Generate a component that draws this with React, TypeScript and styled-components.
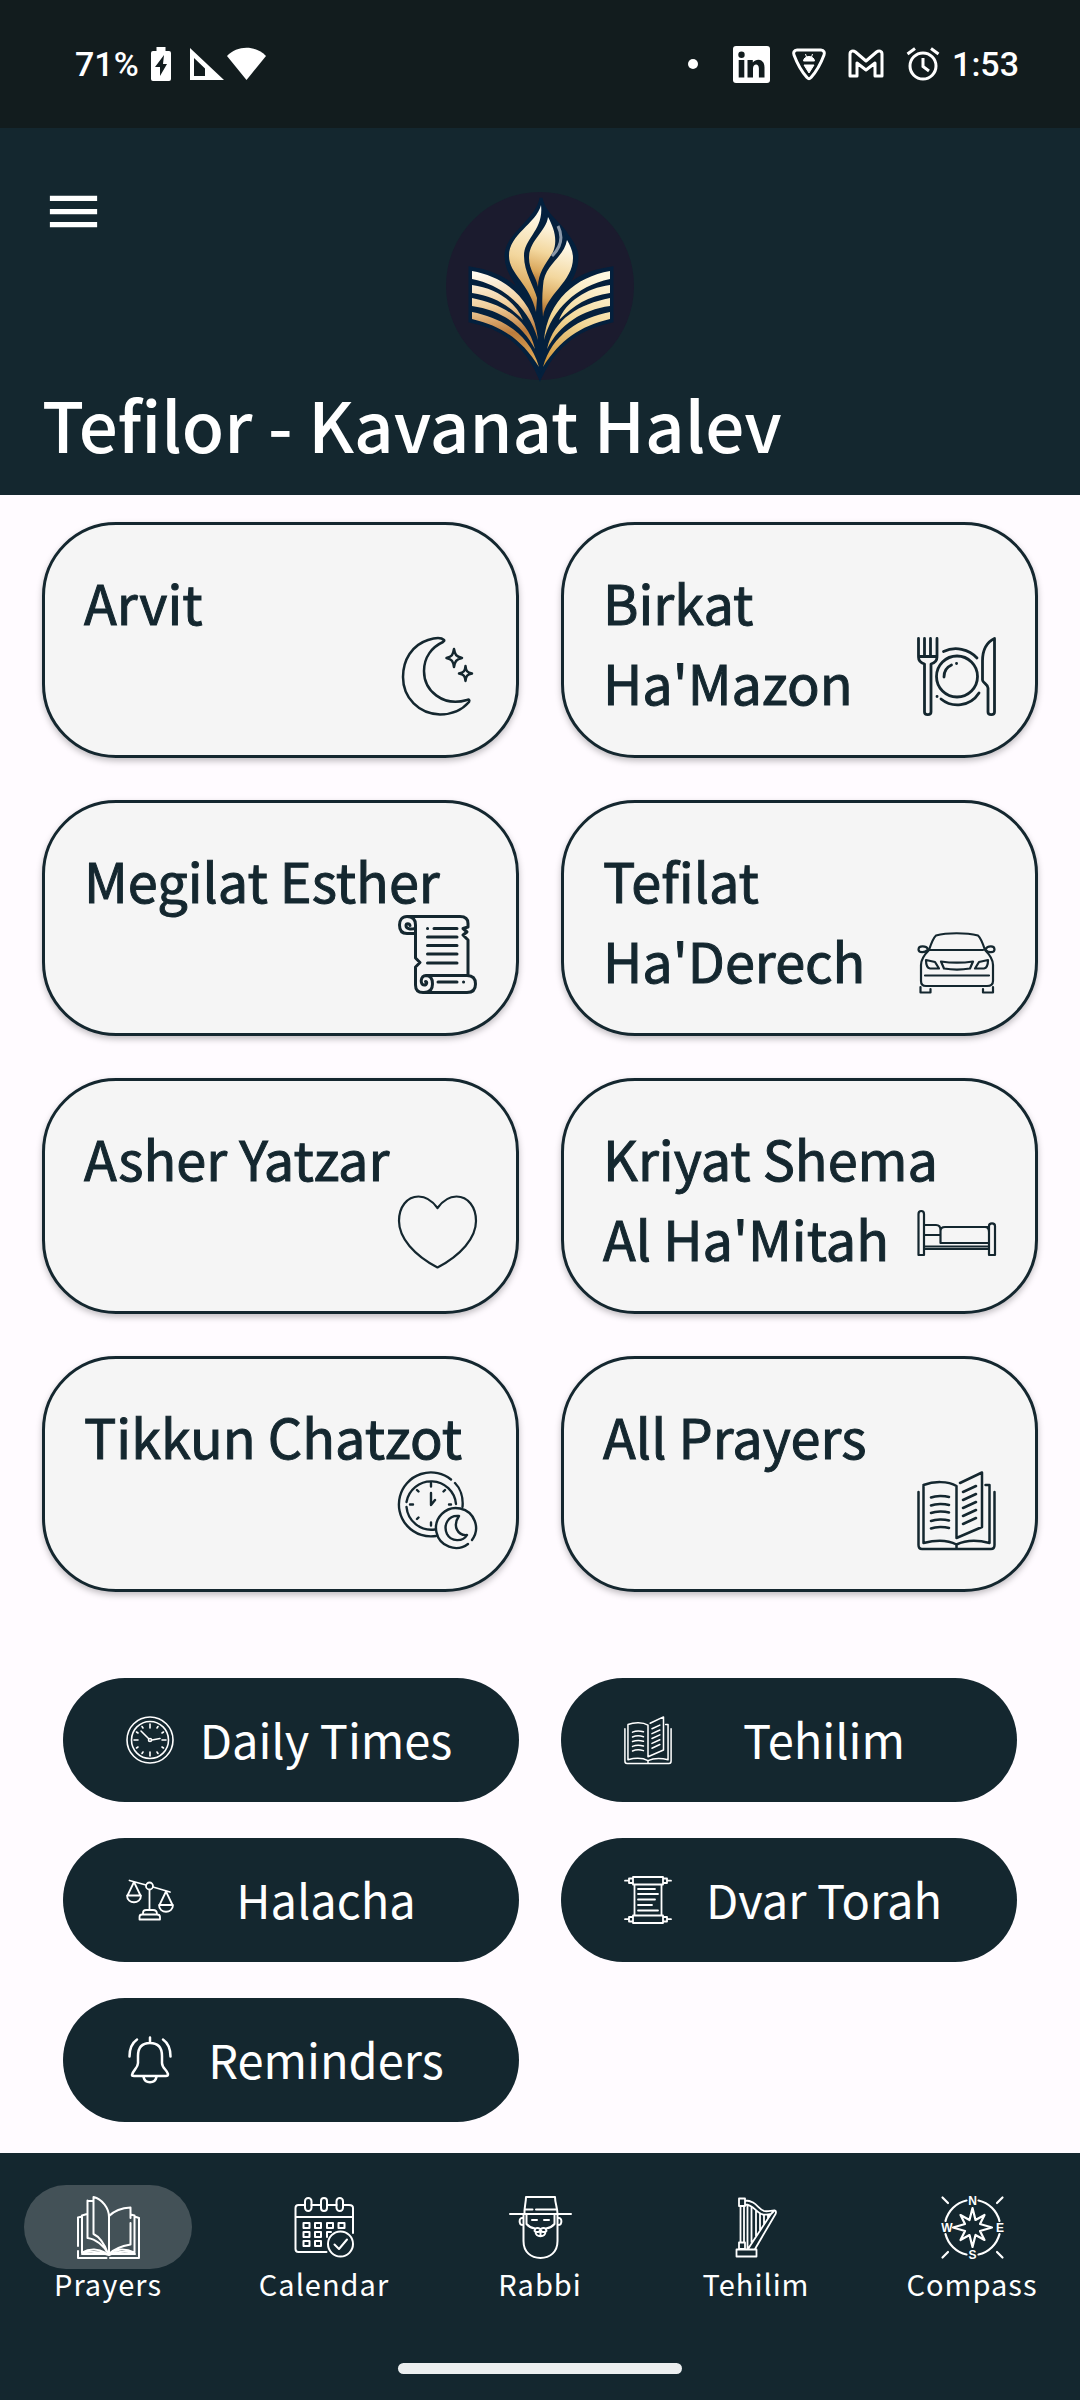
import React from "react";
import styled, { createGlobalStyle, css } from "styled-components";

const ink = "#14272f";
const paper = "#fffbff";
const sans = `"Noto Sans CJK JP", "Noto Sans", sans-serif`;

const GlobalStyle = createGlobalStyle`
  *, *::before, *::after { box-sizing: border-box; }
  body { margin: 0; background: ${paper}; font-family: ${sans}; }
  button { font: inherit; color: inherit; cursor: pointer; }
  svg { display: block; flex: none; overflow: visible; }
`;

const Screen = styled.div`
  display: flex;
  flex-direction: column;
  min-height: 100vh;
`;

const StatusBar = styled.div`
  display: flex;
  justify-content: space-between;
  align-items: center;
  height: 128px;
  padding: 0 61px 0 75px;
  background: #121c1e;
  color: #fff;
  font: 500 34px/42px Roboto, sans-serif;
`;

const StatusGroup = styled.div<{ $gap: number }>`
  display: flex;
  align-items: center;
  gap: ${(p) => p.$gap}px;
`;

const Header = styled.header`
  display: flex;
  flex-direction: column;
  padding: 52px 42px 29px;
  background: ${ink};
  color: #fff;
`;

const HeaderRow = styled.div`
  display: grid;
  grid-template-columns: 1fr auto 1fr;
  align-items: start;
`;

const MenuButton = styled.button`
  justify-self: start;
  padding: 0;
  border: 0;
  background: none;
`;

const LogoSlot = styled.div`
  padding-top: 12px;
`;

const Title = styled.h1`
  margin: 0;
  font-size: 69px;
  line-height: 86px;
  font-weight: 500;
`;

const Main = styled.main`
  flex: 1;
  padding: 27px 42px 31px;
`;

const CardGrid = styled.div`
  display: grid;
  grid-template-columns: repeat(2, minmax(0, 1fr));
  gap: 42px;
`;

const Card = styled.button`
  display: grid;
  min-height: 236px;
  padding: 37px 39px 33px;
  border: 3px solid ${ink};
  border-radius: 74px;
  background: #f5f5f5;
  box-shadow: 0 3px 6px rgba(0, 0, 0, 0.25);
  color: ${ink};
  text-align: left;
`;

const CardLabel = styled.span`
  grid-area: 1 / 1;
  align-self: start;
  font-size: 54px;
  line-height: 80px;
  -webkit-text-stroke: 1px ${ink};
`;

const CardIcon = styled.span`
  grid-area: 1 / 1;
  place-self: end;
  margin-bottom: 6px;
`;

const PillGrid = styled.div`
  display: grid;
  grid-template-columns: repeat(2, minmax(0, 1fr));
  gap: 36px 42px;
  margin-top: 86px;
  padding: 0 21px;
`;

const Pill = styled.button`
  display: flex;
  align-items: center;
  gap: 24px;
  height: 124px;
  padding: 0 63px;
  border: 0;
  border-radius: 62px;
  background: ${ink};
  color: #fff;
`;

const PillLabel = styled.span`
  flex: 1;
  padding: 0 2px 2px 0;
  font-size: 47px;
  line-height: 68px;
  text-align: center;
  white-space: nowrap;
`;

const BottomBar = styled.footer`
  background: ${ink};
  color: #fff;
  padding: 32px 0 26px;
`;

const Tabs = styled.nav`
  display: grid;
  grid-template-columns: repeat(5, minmax(0, 1fr));
`;

const Tab = styled.button`
  display: flex;
  flex-direction: column;
  align-items: center;
  padding: 0;
  border: 0;
  background: none;
  font-size: 29px;
  line-height: 28px;
  letter-spacing: 1px;
`;

const TabIcon = styled.span<{ $active: boolean }>`
  display: grid;
  place-items: center;
  width: 168px;
  height: 84px;
  border-radius: 42px;
  ${(p) =>
    p.$active &&
    css`
      background: #435157;
    `}
`;

const HomeHandle = styled.div`
  width: 284px;
  height: 11px;
  margin: 66px auto 0;
  border-radius: 6px;
  background: #eceff0;
`;

type IconProps = { size: number; box?: number; stroke?: number; children: React.ReactNode };

const Line = ({ size, box = size, stroke = 3, children }: IconProps) => (
  <svg
    width={size}
    height={size}
    viewBox={`0 0 ${box} ${box}`}
    fill="none"
    stroke="currentColor"
    strokeWidth={stroke}
    strokeLinecap="round"
    strokeLinejoin="round"
    aria-hidden="true"
  >
    {children}
  </svg>
);

const Moon = () => (
  <Line size={79} stroke={2.5}>
    <path d="M46 3C43 0 36 1 30 3C14 8 5 23 5 40C5 61 21 77 42 77.5C54 77.5 64 73 71 65C72 63 71 62 69 63C45 70 26 54 26 34C26 20 34 10 45 5C46.5 4 46.5 3.5 46 3Z" />
    <path d="M56 12C57 18 58 19.500 64 21C58 22.500 57 24 56 30C55 24 54 22.500 48.500 21C54 19.500 55 18 56 12Z" />
    <path d="M67.500 29C68 34 69 35.500 74 36.500C69 37.500 68 39 67.500 44C67 39 66 37.500 61 36.500C66 35.500 67 34 67.500 29Z" />
  </Line>
);

const Plate = () => (
  <Line size={79} stroke={2.8}>
    <path d="M1.500 1.500V19.500H20V1.500M7.500 1.500V18M13.500 1.500V18M1.500 20C1.500 24 4 26 7.500 27V75C7.500 78.500 14 78.500 14 75V27C17.500 26 20 24 20 20" />
    <circle cx="40" cy="39.500" r="20.500" />
    <path d="M26.500 14.500C38 9 52 12 60 21M24 62C35 71 53 70 62 56M27 40C27 34 30 30 34.500 28M39.500 26.500h.1M20 59.500h.1" />
    <path d="M77.500 1.500C68 6 65.500 16 65.500 24V43C65.500 46 71 47 71 51V75C71 78.500 77.500 78.500 77.500 75Z" />
  </Line>
);

const Scroll = () => (
  <Line size={79}>
    <path d="M9 1.500H62C67 1.500 70 4 70 8.500V12L65 13.500L69 17L65 20L70 25V60M9 1.500C4 1.500 1.500 5 1.500 10C1.500 16 4 18.500 9 18.500H17.500M9 1.500C15 1.500 17.500 5 17.500 10V43L22 47.500L17.500 52V70C17.500 75 20 77.500 25 77.500H69C75 77.500 77.500 74 77.500 69C77.500 63 74 60.500 69 60.500H28C33 60.500 34.500 64 34.500 69C34.500 75 31 77.500 26 77.500M28 60.500C22 61 22 70 26 70C29 70 29.500 66.500 27.500 66.500M17.500 13C13 15 8 14 8 10.500C8 8 11.500 8 12 10.500" />
    <path d="M29.500 13.500h.1M36 13.500H59M29.500 22H59M29.500 30.500H59M29.500 39H59M29.500 48H59M40 67H59M65.500 67h.1" />
  </Line>
);

const Car = () => (
  <Line size={79} stroke={2.2}>
    <path d="M12 35C14 29 16 23 19 20.500C30 17.500 49 17.500 61 20.500C64 23 66 29 68 35M12 35H66M12 35C6 41 4 45 4 50V66C4 69 6 71 9 71H70C74 71 76 69 76 66V50C76 45 74 41 68 35" />
    <path d="M10.500 35C8 38 1.500 38 1.500 34.500C1.500 30.500 9 30.500 11 34M69 35C71 38 77.500 38 77.500 34.500C77.500 30.500 71 30.500 68.500 34" />
    <path d="M9 45L18 47L22 53.500H13C10 53 9 50 9 45ZM71 45L62 47L58 53.500H67C70 53 71 50 71 45ZM24 46.500C34 48 46 48 56 46.500L53 53.500C44 55 36 55 27 53.500ZM8 60.500H72M3.500 72V77.500H13.500V74M76 72V77.500H66V74" />
  </Line>
);

const Heart = () => (
  <Line size={79} stroke={2.2}>
    <path d="M39.500 15C33 6 27 3.500 20.500 3.500C9 3.500 1 14 1 28C1 45 16 62 39.500 74.500C63 62 78 45 78 28C78 14 70 3.500 58.500 3.500C52 3.500 46 6 39.500 15Z" />
  </Line>
);

const Bed = () => (
  <Line size={79} stroke={2.2}>
    <path d="M1.500 62V21C1.500 17 7 17 7 21V62ZM72 62V33C72 29.500 78 29.500 78 33V62ZM7 32H19C22 32 23.500 34 23.500 37V42H7M23.500 50V38C23.500 35 25 34 28 34H72M23.500 50H72M7 53.500H72M7 56H72M68 34C71 34 72 36 72 39" />
  </Line>
);

const NightClock = () => (
  <Line size={79} stroke={2.4}>
    <path d="M64.500 36C65.500 26 62 17 57 12M53 8.500A32 32 0 1 0 38 65M58 33A25 25 0 0 0 8.500 31M8.500 36A25 25 0 0 0 37 58.500M33 22V34L37 29M33 12.500v3M33 51.500v3M12 33.500h3M51 33.500h2M19 19l1.500 1.500M47 19l-1.500 1.500M19 48l1.500-1.500" />
    <path d="M70 73A20 20 0 1 1 74 69" />
    <path d="M61 45C50 44 45 54 49 63C53 71 65 71 69 64C60 65 54 55 61 45Z" />
  </Line>
);

const Book = ({ size, stroke }: { size: number; stroke: number }) => (
  <Line size={size} box={79} stroke={stroke}>
    <path d="M1.500 21V74C1.500 76.500 2.500 78 5 78H74C76.500 78 77.500 76.500 77.500 74V21M6.500 15V72C18 69 31 69 39.500 73.500C49 69 61 69 72.500 72V14H68.500M6.500 14C17 10 31 10 39.500 15V67L65 56V1.500L43 12M39.500 74V77" />
    <path d="M14 26.500C19 24.500 27 24.500 32 26M14 34.500C19 32.500 27 32.500 32 34M14 42C19 40 27 40 32 41.500M14 50C19 48 27 48 32 49.500M14 57.500C19 55.500 27 55.500 32 57M46 21L59 15M46 29L59 23M46 37L59 31M46 45L59 39M46 53L59 47" />
  </Line>
);

const Clock = () => (
  <Line size={48} stroke={1.6}>
    <circle cx="24" cy="24" r="23" />
    <circle cx="24" cy="24" r="18.500" />
    <circle cx="24" cy="24" r="1.500" />
    <path d="M22.500 22.500L15 15M26 24L34 22.500M24 8v4M24 36v4M8 24h4M36 24h4M16 10.500l1 1.500M32 10.500l-1 1.500M10.500 16l1.500 1M37.500 16l-1.500 1M10.500 32l1.500-1M37.500 32l-1.500-1M16 37.500l1-1.500M32 37.500l-1-1.500" />
  </Line>
);

const Scales = () => (
  <Line size={48} stroke={1.8}>
    <path d="M3.500 4.500L20 9M27 11L44 16M8 6L1.500 19.500H14.500ZM1 19.500C1 28.500 15 28.500 15 19.500M40 15.500L33.500 29H46.500ZM33 29C33 38 47 38 47 29M23.500 14V34M17 38V37C17 35 18 34 20 34H27C30 34 31 35 31 38M13.500 43.500V41C13.500 39 14.500 38.500 16 38.500H31C33 38.500 34 39 34 41V43.500Z" />
    <circle cx="23.500" cy="10" r="3.500" />
  </Line>
);

const Bell = () => (
  <Line size={48} stroke={2.5}>
    <path d="M24 1.500V6M24 7C15 7 12 13 12 20V27C12 32 7 34 6 39C6 40 7 40 8 40H40C42 40 42 39 42 38C41 34 36 32 36 27V20C36 13 33 7 24 7ZM17.500 41C19 48 29 48 30.500 41M11 3.500C6 7 3.500 13 3.500 20.500M37 3.500C42 7 44.500 13 44.500 20.500" />
  </Line>
);

const Torah = () => (
  <Line size={48} stroke={1.8}>
    <path d="M9 1h30v7.500H9ZM9 39.500h30V47H9ZM9 2.500H5V7H9M39 2.500H43V7H39M9 41H5V45.500H9M39 41H43V45.500H39M1 4.700H5M43 4.700H47M1 43.200H5M43 43.200H47M10.500 9V39M37.500 9V39M14 13H31M14 18H34M14 23.500H31M14 29H28M14 34.500H34" />
  </Line>
);

const OpenBook = () => (
  <Line size={63} stroke={2}>
    <path d="M10 18L5 19.500V56.500M5 20.500L1 21.500V50M1 55V62H29.500M33 62H62V22L57.500 20.500M53.500 18.500L57.500 19.500V56.500M10.500 4.500V42C19 43 27 50 31 57.500C27 47 23 41 16.500 38V1C25 3 32 12 32 21V56M16.500 5H11M32 20C37 15 44 12 53.500 11.500V22M53.500 27V48.500C45 50 37 53 32 58C37 53 48 52 57 56.500C48 55 38 56 32 59C24 56 14 55 5 56.500C13 52 22 53 28 56.500M5 58H58" />
  </Line>
);

const Calendar = () => (
  <Line size={63} stroke={2}>
    <path d="M12 9H5.500C3.500 9 2.500 10 2.500 12V53C2.500 55 3.500 56 5.500 56H33.500M18.500 9H28M34 9H43.500M50 9H56C58.500 9 60 10 60 12V37M2.500 21H60" />
    <rect x="12" y="2" width="6.500" height="13" rx="3.200" />
    <rect x="28" y="2" width="6" height="13" rx="3" />
    <rect x="43.500" y="2" width="6.500" height="13" rx="3.200" />
    <path d="M10.500 27h6v5h-6ZM22 27h6v5h-6ZM34 27h6v5h-6ZM45.500 27h6v5h-6ZM10.500 36h6v5h-6ZM22 36h6v5h-6ZM38 36H34V41M10.500 45h6v5h-6ZM22 45h6v5h-6Z" />
    <circle cx="47.500" cy="48" r="12.500" />
    <path d="M41.500 48.500L46 53L54 43.500" />
  </Line>
);

const Rabbi = () => (
  <Line size={63} stroke={2}>
    <path d="M15.500 18C15 12 17 7 17 1H46C46 7 48.500 12 48.500 18M1 18H62M16 13.500H23.500M27 13.500H48M14.500 18V45C14.500 56 22 62 31.500 62C41 62 48.500 56 48.500 45V18M17.500 18V28C20 31 23 32 26 32.500M45.500 18V28C43 31 40 32 37 32.500M14 22C9.500 21 9.500 29 14 29M49 22C53.500 21 53.500 29 49 29M23 24H28M35 24H40" />
    <path d="M31.500 33C28 31 26 32 25.500 35C29 37 31 36 31.500 33C32 36 34 37 37.500 35C37 32 35 31 31.500 33ZM26.500 36C27 41.500 36 41.500 36.500 36M31.500 37V39" />
  </Line>
);

const Harp = () => (
  <Line size={63} stroke={1.8}>
    <path d="M14 2.500h6V10h-6ZM14 46.500h6V53h-6ZM11.500 53.500H31.500V60.500H11.500ZM15.500 10V46M19 10V46M20 4.500C31 4.500 33 13 39 15C43 16 47 14 50 14.500C51.500 15 51 17 50.500 18L30 53M20 8.500C29 8.500 31 17 38 18.500C41 19 44 18 46 18L23 53M22.500 10V53M26.500 11V46M31 14.500V40M35 18V34M39 19V28M43 19V22M46 18L49 15" />
  </Line>
);

const Compass = () => (
  <Line size={63} stroke={2.2}>
    <path d="M37.500 4.500A28 28 0 0 1 58.500 25M58.500 38A28 28 0 0 1 37.500 58.500M25.500 58.500A28 28 0 0 1 4.500 38M4.500 25A28 28 0 0 1 25.500 4.500M1.500 1.500L7 7M61.500 1.500L56 7M1.500 61.500L7 56M61.500 61.500L56 56" />
    <path d="M31.500 12L34.500 24L43.500 19L39 28L51 31.500L39 35L43.500 44L34.500 39L31.500 51L28.500 39L19.500 44L24 35L12 31.500L24 28L19.500 19L28.500 24Z" />
    <g fill="currentColor" stroke="none" fontFamily="Liberation Sans, sans-serif" fontSize="12" fontWeight="700" letterSpacing="0" textAnchor="middle">
      <text x="31.500" y="9">N</text>
      <text x="31.500" y="62.500">S</text>
      <text x="6" y="36">W</text>
      <text x="59" y="36">E</text>
    </g>
  </Line>
);

const Logo = () => (
  <svg width="188" height="188" viewBox="0 0 188 188" role="img" aria-label="Tefilor">
    <defs>
      <linearGradient id="flame" x1="0.600" y1="0" x2="0.500" y2="1">
        <stop offset="0" stopColor="#fffdf2" />
        <stop offset="0.500" stopColor="#f3d79e" />
        <stop offset="0.800" stopColor="#d9a65a" />
        <stop offset="1" stopColor="#a8672c" />
      </linearGradient>
      <linearGradient id="pagesLeft" gradientUnits="userSpaceOnUse" x1="50" y1="80" x2="60" y2="175">
        <stop offset="0" stopColor="#fffaf0" />
        <stop offset="0.350" stopColor="#f2cf9c" />
        <stop offset="0.650" stopColor="#bd7c3c" />
        <stop offset="1" stopColor="#e0ac58" />
      </linearGradient>
      <linearGradient id="pagesRight" gradientUnits="userSpaceOnUse" x1="50" y1="80" x2="80" y2="175">
        <stop offset="0" stopColor="#fff8e0" />
        <stop offset="0.500" stopColor="#f2d898" />
        <stop offset="1" stopColor="#cf9336" />
      </linearGradient>
      <g id="pages">
        <path d="M26 79C60 85 88 108 92 148C84 118 60 94 26 87Z" />
        <path d="M26 93C50 96 70 110 77 128C62 113 48 104 26 101Z" />
        <path d="M26 106C56 112 82 126 89 157C76 132 54 118 26 114Z" />
        <path d="M26 120C56 126 84 142 93 175C76 148 56 134 26 127Z" />
      </g>
    </defs>
    <circle cx="94" cy="94" r="94" fill="#1b1b2e" />
    <path
      d="M95 6C92 28 60 42 60 64C60 80 70 88 76 102C62 86 44 79 24 76V129C54 135 80 150 94 186C110 150 136 135 166 129V76C144 79 128 86 114 102C122 92 131 82 131 64C131 54 122 46 119 40C114 32 98 22 95 6Z"
      fill="#04203d"
      stroke="#04203d"
      strokeWidth="3"
    />
    <g fill="url(#flame)">
      <path d="M95 13C90 32 63 42 63 64C63 82 84 92 90 120L91 106C88 94 78 80 78 64C78 46 98 38 95 13Z" />
      <path d="M102 25C100 40 83 48 83 66C83 78 90 84 92 95C92 80 100 72 107 60C112 48 108 36 102 25Z" />
      <path d="M121 48C118 66 98 72 97 94C96 104 96 114 97 125C100 102 127 90 127 66C127 59 124 53 121 48Z" />
    </g>
    <path d="M112 34C118 46 114 56 106 64" fill="none" stroke="#8b98a8" strokeWidth="3" />
    <use href="#pages" fill="url(#pagesLeft)" />
    <use href="#pages" fill="url(#pagesRight)" transform="translate(190 0) scale(-1 1)" />
  </svg>
);

const MenuIcon = () => (
  <svg width="63" height="63" viewBox="0 0 24 24" fill="#fff" aria-hidden="true">
    <path d="M3 18h18v-2H3v2zm0-5h18v-2H3v2zm0-7v2h18V6H3z" />
  </svg>
);

const Signals = () => (
  <svg width="115" height="36" viewBox="0 0 115 36" fill="#fff" role="img" aria-label="Battery charging, mobile signal, wifi">
    <path fillRule="evenodd" d="M5.500 1h9v4H18a2 2 0 0 1 2 2v26a2 2 0 0 1-2 2H2a2 2 0 0 1-2-2V7a2 2 0 0 1 2-2h3.500ZM13 9L4 21h5v9l7-12h-4Z" />
    <path fillRule="evenodd" d="M39 2L73 34H39ZM43 12V30H54V22.500Z" />
    <path d="M76 10C86-1 105-1 115 10L95.500 34Z" />
  </svg>
);

const Dot = styled.span`
  width: 10px;
  height: 10px;
  margin-right: 13px;
  border-radius: 5px;
  background: #fff;
`;

const LinkedIn = () => (
  <svg width="37" height="37" viewBox="0 0 37 37" role="img" aria-label="LinkedIn">
    <rect width="37" height="37" rx="3" fill="#fff" />
    <g fill="#121c1e">
      <circle cx="8.500" cy="8.700" r="3.200" />
      <path d="M5.700 14h5.600v17.500H5.700ZM14.500 14h5.300v2.500c4-5 11.700-3.500 11.700 5v10h-5.600v-9c0-5.500-5.900-5-5.900 0v9h-5.500Z" />
    </g>
  </svg>
);

const Shield = () => (
  <svg width="34" height="34" viewBox="0 0 34 34" role="img" aria-label="Protection">
    <path d="M5 3H29C32 3 33 6 32 8C29 16 24 25 19 30.500C18 32 16 32 15 30.500C10 25 5 16 2 8C1 6 2 3 5 3Z" fill="none" stroke="#fff" strokeWidth="3" />
    <path d="M11.500 14C12 8 22 8 22.500 14ZM13.500 7l1 3M20.500 7l-1 3M12 18H22L17 26Z" fill="#fff" stroke="#fff" />
  </svg>
);

const Mail = () => (
  <svg width="36" height="30" viewBox="0 0 36 30" role="img" aria-label="Gmail" fill="none" stroke="#fff" strokeWidth="3" strokeLinejoin="round">
    <path d="M2 27V5C2 2 5 1 7.500 3L18 12L28.500 3C31 1 34 2 34 5V27H27V14L18 21L9 14V27Z" />
  </svg>
);

const Alarm = () => (
  <svg width="34" height="34" viewBox="0 0 34 34" role="img" aria-label="Alarm" fill="none" stroke="#fff" strokeWidth="3">
    <circle cx="17" cy="19" r="13" />
    <path d="M17 11V19.500L23 24M1.500 7L9 1.500M32.500 7L25 1.500" />
  </svg>
);

const prayers = [
  { label: "Arvit", icon: <Moon /> },
  { label: "Birkat Ha'Mazon", icon: <Plate /> },
  { label: "Megilat Esther", icon: <Scroll /> },
  { label: "Tefilat Ha'Derech", icon: <Car /> },
  { label: "Asher Yatzar", icon: <Heart /> },
  { label: "Kriyat Shema Al Ha'Mitah", icon: <Bed /> },
  { label: "Tikkun Chatzot", icon: <NightClock /> },
  { label: "All Prayers", icon: <Book size={79} stroke={2.5} /> },
];

const shortcuts = [
  { label: "Daily Times", icon: <Clock /> },
  { label: "Tehilim", icon: <Book size={48} stroke={2.5} /> },
  { label: "Halacha", icon: <Scales /> },
  { label: "Dvar Torah", icon: <Torah /> },
  { label: "Reminders", icon: <Bell /> },
];

const tabs = [
  { label: "Prayers", icon: <OpenBook /> },
  { label: "Calendar", icon: <Calendar /> },
  { label: "Rabbi", icon: <Rabbi /> },
  { label: "Tehilim", icon: <Harp /> },
  { label: "Compass", icon: <Compass /> },
];

export default function App() {
  const [active, setActive] = React.useState("Prayers");
  return (
    <Screen>
      <GlobalStyle />
      <StatusBar>
        <StatusGroup $gap={12}>
          <span>71%</span>
          <Signals />
        </StatusGroup>
        <StatusGroup $gap={22}>
          <Dot />
          <LinkedIn />
          <Shield />
          <Mail />
          <StatusGroup $gap={12}>
            <Alarm />
            <span>1:53</span>
          </StatusGroup>
        </StatusGroup>
      </StatusBar>
      <Header>
        <HeaderRow>
          <MenuButton aria-label="Open menu">
            <MenuIcon />
          </MenuButton>
          <LogoSlot>
            <Logo />
          </LogoSlot>
        </HeaderRow>
        <Title>Tefilor - Kavanat Halev</Title>
      </Header>
      <Main>
        <CardGrid>
          {prayers.map((p) => (
            <Card key={p.label}>
              <CardLabel>{p.label}</CardLabel>
              <CardIcon>{p.icon}</CardIcon>
            </Card>
          ))}
        </CardGrid>
        <PillGrid>
          {shortcuts.map((s) => (
            <Pill key={s.label}>
              {s.icon}
              <PillLabel>{s.label}</PillLabel>
            </Pill>
          ))}
        </PillGrid>
      </Main>
      <BottomBar>
        <Tabs>
          {tabs.map((t) => (
            <Tab key={t.label} onClick={() => setActive(t.label)}>
              <TabIcon $active={active === t.label}>{t.icon}</TabIcon>
              {t.label}
            </Tab>
          ))}
        </Tabs>
        <HomeHandle />
      </BottomBar>
    </Screen>
  );
}
